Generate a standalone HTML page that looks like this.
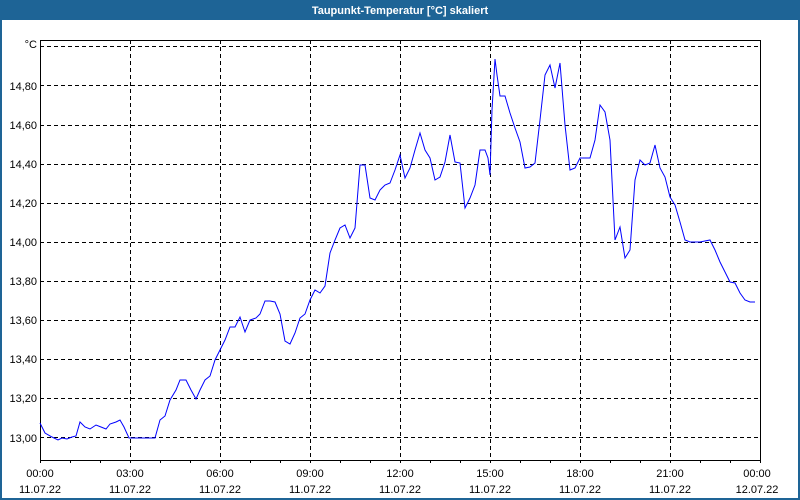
<!DOCTYPE html>
<html><head><meta charset="utf-8"><style>
body{margin:0;width:800px;height:500px;overflow:hidden;background:#fff;font-family:"Liberation Sans",sans-serif}
</style></head><body>
<svg width="800" height="500" xmlns="http://www.w3.org/2000/svg" style="display:block">
<rect x="0" y="0" width="800" height="500" fill="#1e6496"/>
<rect x="2" y="20" width="796" height="478" fill="#fff"/>
<text x="400" y="14" font-size="11" font-weight="bold" fill="#fff" text-anchor="middle" font-family="Liberation Sans">Taupunkt-Temperatur [°C] skaliert</text>
<g stroke="#000" stroke-width="1" stroke-dasharray="4,3" fill="none">
<path d="M40 46.5H760M40 85.5H760M40 125.5H760M40 164.5H760M40 203.5H760M40 242.5H760M40 281.5H760M40 320.5H760M40 359.5H760M40 398.5H760M40 437.5H760"/>
<path d="M130.5 40V460M220.5 40V460M310.5 40V460M400.5 40V460M490.5 40V460M580.5 40V460M670.5 40V460"/>
</g>
<path d="M40.5 40V460.5H760.5V40M40 40.5H760" stroke="#000" stroke-width="1" fill="none"/>
<path d="M40.5 460v3M70.5 460v3M100.5 460v3M130.5 460v3M160.5 460v3M190.5 460v3M220.5 460v3M250.5 460v3M280.5 460v3M310.5 460v3M340.5 460v3M370.5 460v3M400.5 460v3M430.5 460v3M460.5 460v3M490.5 460v3M520.5 460v3M550.5 460v3M580.5 460v3M610.5 460v3M640.5 460v3M670.5 460v3M700.5 460v3M730.5 460v3M760.5 460v3" stroke="#000"/>
<g font-size="11" fill="#000" text-anchor="end" font-family="Liberation Sans">
<text x="37" y="48">°C</text>
<text x="37" y="90">14,80</text><text x="37" y="129">14,60</text><text x="37" y="168">14,40</text>
<text x="37" y="207">14,20</text><text x="37" y="246">14,00</text><text x="37" y="285">13,80</text>
<text x="37" y="324">13,60</text><text x="37" y="363">13,40</text><text x="37" y="402">13,20</text><text x="37" y="442">13,00</text>
</g>
<g font-size="11" fill="#000" text-anchor="middle" font-family="Liberation Sans">
<text x="40" y="477">00:00</text><text x="40" y="493">11.07.22</text>
<text x="130" y="477">03:00</text><text x="130" y="493">11.07.22</text>
<text x="220" y="477">06:00</text><text x="220" y="493">11.07.22</text>
<text x="310" y="477">09:00</text><text x="310" y="493">11.07.22</text>
<text x="400" y="477">12:00</text><text x="400" y="493">11.07.22</text>
<text x="490" y="477">15:00</text><text x="490" y="493">11.07.22</text>
<text x="580" y="477">18:00</text><text x="580" y="493">11.07.22</text>
<text x="670" y="477">21:00</text><text x="670" y="493">11.07.22</text>
<text x="757" y="477">00:00</text><text x="757" y="493">12.07.22</text>
</g>
<polyline fill="none" stroke="#0000ff" stroke-width="1" points="40,423 45,433 52,437 58,440 62,438 67,439 72,437 76,436 80,422 85,427 90,429 96,425 101,427 106,429 110,424 116,422 120,420 124,427 129,438 155,438 160,420 165,416 170,400 176,390 180,380 186,380 191,390 196,399 200,390 205,380 210,376 215,360 220,350 225,340 230,327 235,327 240,317 245,332 250,320 256,318 260,314 265,301 270,301 275,302 280,314 285,341 290,344 295,333 300,318 305,314 310,300 315,290 320,293 325,286 330,253 335,240 340,228 345,225 350,238 355,228 360,165 365,165 370,198 375,200 380,190 385,185 390,183 395,170 400,155 405,178 410,168 415,150 420,133 425,150 430,158 435,180 440,177 445,162 450,135 455,162 460,163 465,208 470,198 475,185 480,150 485,150 488,158 490,175 492,110 495,59 497,75 500,96 505,96 510,113 515,128 520,142 525,168 530,167 535,163 540,120 545,75 550,65 555,88 560,63 565,125 570,170 575,168 580,158 585,158 590,158 595,140 600,105 605,112 610,140 615,240 620,227 625,258 630,250 635,180 640,160 645,165 650,163 655,145 660,168 665,177 670,197 675,205 680,222 685,240 690,242 700,242 710,240 715,250 720,262 725,272 730,282 735,283 740,293 745,300 750,302 755,302"/>
</svg>
</body></html>
